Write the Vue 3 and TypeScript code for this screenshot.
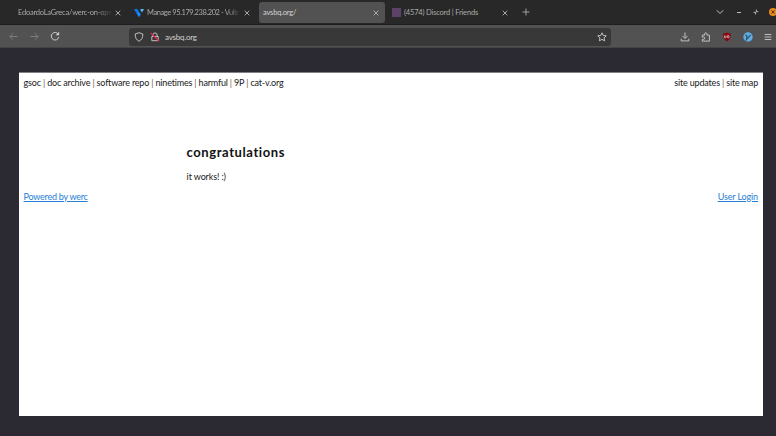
<script setup lang="ts">
interface Tab { title: string; icon?: 'vultr' | 'discord'; active?: boolean; kind: string }

const tabs: Tab[] = [
  { title: 'EdoardoLaGreca/werc-on-ope', kind: 'repo' },
  { title: 'Manage 95.179.238.202 - Vultr', icon: 'vultr', kind: 'manage' },
  { title: 'avsbq.org/', active: true, kind: 'site' },
  { title: '(4574) Discord | Friends', icon: 'discord', kind: 'chat' },
]
const links: string[] = ['gsoc', 'doc archive', 'software repo', 'ninetimes', 'harmful', '9P', 'cat-v.org']
</script>

<template>
  <div class="browser">
    <div class="tabbar">
      <div v-for="tab in tabs" :key="tab.title" class="tab" :class="[tab.kind, { active: tab.active }]">
        <svg v-if="tab.icon === 'vultr'" class="favicon" viewBox="0 0 10 10">
          <path d="M0 1h3.2l1.4 2.3-1.8 2.8z" fill="#0878f0" />
          <path d="M3.2 1 6.8 6.6 5 9.2 2.8 6.1l1.8-2.8z" fill="#1689ff" />
          <path d="M6.7 1H10L8 4.4 6.4 2z" fill="#55b8ff" />
        </svg>
        <span v-else-if="tab.icon === 'discord'" class="favicon block"></span>
        <span class="title">{{ tab.title }}</span>
        <svg class="close" viewBox="0 0 6 6"><path d="m.7.7 4.6 4.6m0-4.6L.7 5.3" /></svg>
      </div>
      <svg class="plus" viewBox="0 0 8 8"><path d="M4 .5v7M.5 4h7" /></svg>
      <div class="window">
        <svg width="8" height="8" viewBox="0 0 8 8"><path d="m.7 2.2 3.3 3.3 3.3-3.3" /></svg>
        <svg width="4" height="8" viewBox="0 0 4 8"><path d="M0 4.500h4" /></svg>
        <svg width="6" height="8" viewBox="0 0 6 8"><path d="M3.300 1.700v2h2M.6 4.400h2v2" /></svg>
        <svg width="8" height="8" viewBox="0 0 8 8" class="exit"><circle cx="4" cy="4" r="4" /><path d="m2.400 2.400 3.200 3.200m0-3.200L2.400 5.600" /></svg>
      </div>
    </div>

    <div class="toolbar">
      <div class="nav">
        <svg class="dim" width="9" height="9" viewBox="0 0 9 9"><path d="M8.700 4.500H.8m3.500-3.300L.8 4.500l3.500 3.300" /></svg>
        <svg class="dim" width="9" height="9" viewBox="0 0 9 9"><path d="M.3 4.500h7.900M4.700 1.200l3.500 3.300-3.500 3.300" /></svg>
        <svg class="reload" width="10" height="10" viewBox="0 0 10 10"><path d="M8.400 3.400A3.800 3.800 0 1 0 8.800 6" /><path class="tip" d="M9.200.8v3.500H5.700z" /></svg>
      </div>
      <div class="address">
        <svg width="10" height="10" viewBox="0 0 10 10"><path d="M5 .7 8.800 2c.1 3.400-1 5.800-3.800 7.300C2.200 7.800 1.100 5.400 1.200 2z" /></svg>
        <svg class="lock" width="10" height="10" viewBox="0 0 10 10"><path d="M2.900 4.500V3a2.100 2.100 0 0 1 4.200 0v1.500M1.800 4.500h6.400v4.200H1.800z" /><path class="slash" d="M.8 1 9.200 9.200" /></svg>
        <span class="url">avsbq.org</span>
        <svg class="star" width="10" height="10" viewBox="0 0 10 10"><path d="m5 .8 1.250 2.700 3 .35-2.200 2 .6 3L5 7.350l-2.650 1.500.6-3-2.200-2 3-.35z" /></svg>
      </div>
      <div class="actions">
        <svg width="10" height="10" viewBox="0 0 10 10"><path d="M5 .5v5.700M2.500 3.900 5 6.400l2.500-2.500M1.200 6.800v2.100h7.600V6.800" /></svg>
        <svg width="10" height="10" viewBox="0 0 10 10"><path d="M1.300 3.100h2.400V1.900a1.100 1.100 0 0 1 2.200 0v1.200h2.500v6H1.300V7.300h1.400a1 1 0 0 0 0-2.200H1.300z" /></svg>
        <svg class="guard" width="10" height="10" viewBox="0 0 10 10"><path class="shield" d="M5 .5c1.300.8 2.600.9 3.900 1 .1 4-.9 6.300-3.900 8-3-1.700-4-4-3.900-8C2.400 1.400 3.700 1.300 5 .5" /><path class="mark" d="M2.500 3.600v1.500q0 .7.700.7t.8-.7V3.600m1.300.6q0-.6.900-.6t.9.600v1q0 .6-.9.600t-.9-.6z" /></svg>
        <svg class="bird" width="10" height="10" viewBox="0 0 10 10"><circle cx="5" cy="5" r="4.700" /><path d="m2.600 2.800 1.300 1.300L3.500 7.500l4.200-4.600" /></svg>
        <svg class="menu" width="8" height="10" viewBox="0 0 8 10"><path d="M.7 2.500h6.600M.7 5h6.600M.7 7.500h6.600" /></svg>
      </div>
    </div>

    <main class="viewport">
      <div class="page">
        <header>
          <nav class="links"><template v-for="(link, i) in links" :key="link"><span v-if="i" class="sep"> | </span>{{ link }}</template></nav>
          <nav class="sitelinks">site updates<span class="sep"> | </span>site map</nav>
        </header>
        <article><h1>congratulations</h1><p>it works! :)</p></article>
        <footer><a class="powered">Powered by werc</a><a class="login">User Login</a></footer>
      </div>
    </main>
  </div>
</template>

<style>
body { margin: 0; overflow: hidden; }
</style>
<style scoped>
* { box-sizing: border-box; }
.browser { width: 776px; height: 436px; overflow: hidden; background: #2b2932; font-family: Lato, "Open Sans", sans-serif; font-variant-ligatures: none; display: flex; flex-direction: column; }
svg { display: block; flex: none; fill: none; stroke: #c0c0c0; stroke-width: 1; }
.tabbar { height: 25px; background: #282828; display: flex; align-items: center; gap: 3px; padding-left: 1px; border-bottom: 1px solid #1e1e1e; }
.tab { width: 126px; height: 21px; margin-top: 1px; display: flex; align-items: center; padding: 0 6px 0 4px; border-radius: 3px; flex: none; color: #aaa; font-size: 7.5px; letter-spacing: -.18px; }
.tab.repo { padding-left: 17px; }
.active { background: #525252; color: #d4d4d4; }
.title { flex: 1; white-space: nowrap; line-height: 12px; margin-top: 1px; }
.repo .title, .manage .title { flex: 0 0 95px; margin-right: 2px; mask-image: linear-gradient(to right, #000 82%, transparent); }
.repo .title { letter-spacing: -.22px; }
.manage .title { letter-spacing: -.42px; }
.favicon { width: 10px; height: 10px; margin-right: 3px; stroke: none; }
.block { width: 9px; height: 9px; background: #5b4368; }
.close { width: 6px; height: 6px; stroke: #b4b4b4; stroke-width: .9; }
.plus { width: 8px; height: 8px; margin-left: 5px; stroke: #aaa; stroke-width: .9; }
.window { margin-left: 183px; display: flex; align-items: center; gap: 13px; }
.window svg:nth-child(3) { margin-left: -1px; }
.window .exit { margin-left: -3px; fill: #e88a20; stroke: #53371d; }
.exit circle { stroke: none; }
.toolbar { height: 23px; background: #525252; display: flex; align-items: center; border-bottom: 1px solid #454348; }
.nav { width: 129px; display: flex; align-items: center; gap: 12px; padding-left: 9px; }
.nav .dim { stroke: #7c7c7c; }
.reload { margin-left: -1px; stroke: #ccc; }
.nav .tip { fill: #ccc; stroke: none; }
.address { width: 482px; height: 18px; margin-top: 1px; background: #383838; border-radius: 3px; display: flex; align-items: center; padding: 0 4px 0 5px; }
.lock { margin-left: 6px; }
.lock .slash { stroke: #e02950; stroke-width: 1.3; }
.url { margin-left: 5px; color: #d0d0d0; font-size: 8px; line-height: 12px; letter-spacing: -.22px; }
.star { margin-left: auto; }
.actions { display: flex; align-items: center; margin-left: 69px; gap: 11px; margin-top: 1px; }
.guard .shield { fill: #870611; stroke: none; }
.guard .mark { stroke: #eee; stroke-width: .7; }
.bird circle { fill: #60aee4; stroke: none; }
.bird path { stroke: #315775; stroke-width: 1.3; }
.viewport { flex: 1; padding: 24px 13px 20px 19px; }
.page { height: 344px; background: #fff; border-top: 1px solid #828087; color: #181818; font-size: 9px; line-height: 12px; padding: 4px 5px 0 4.6px; }
header, footer { display: flex; justify-content: space-between; white-space: nowrap; }
nav { white-space: pre; letter-spacing: -.18px; }
.sep { color: #805642; }
article { margin-left: 163px; height: 101.5px; padding-top: 54px; }
h1 { margin: 0; font-size: 13px; line-height: 18px; letter-spacing: .58px; color: #111; }
p { margin: 10px 0 0; letter-spacing: -.12px; }
a { color: #277ed5; text-decoration: underline; letter-spacing: -.25px; }
.login { letter-spacing: -.14px; }
</style>
